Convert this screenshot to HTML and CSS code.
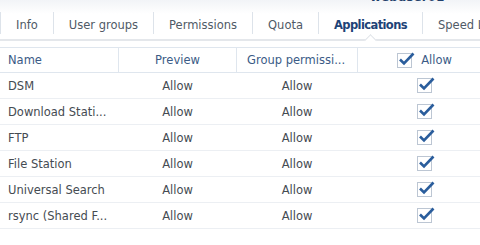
FILE: index.html
```html
<!DOCTYPE html>
<html lang="en">
<head>
  <meta charset="UTF-8">
  <title>Edit user - Applications</title>
  <link rel="stylesheet" href="styles.css">
</head>
<body>
  <div class="head">
    <div class="title"><span>webuser01</span></div>
    <div class="tabs">
      <span class="tab">Info</span>
      <span class="tab">User groups</span>
      <span class="tab">Permissions</span>
      <span class="tab">Quota</span>
      <span class="tab active">Applications</span>
      <span class="tab">Speed Limit</span>
    </div>
  </div>

  <table class="grid">
    <thead>
      <tr>
        <th class="col-name">Name</th>
        <th class="col-preview">Preview</th>
        <th class="col-group">Group permissi...</th>
        <th class="col-allow"><span class="check"></span>Allow</th>
      </tr>
    </thead>
    <tbody></tbody>
  </table>

  <script>
    const apps = ['DSM', 'Download Stati...', 'FTP', 'File Station', 'Universal Search', 'rsync (Shared F...'];
    const tick = '<svg class="tick" viewBox="0 0 18 16"><path d="M3 8.5 L7 12.5 L16.5 2.5" /></svg>';

    const rows = apps.map(name => `
      <tr>
        <td class="col-name">${name}</td>
        <td class="col-preview">Allow</td>
        <td class="col-group">Allow</td>
        <td class="col-allow"><span class="check"></span></td>
      </tr>`).join('');
    document.querySelector('.grid tbody').innerHTML = rows;
    document.querySelectorAll('.check').forEach(c => c.innerHTML = tick);
  </script>
</body>
</html>
```

FILE: styles.css
```css
body {
  margin: 0;
  font-family: "DejaVu Sans", Verdana, sans-serif;
  font-size: 11.5px;
  background: #fff;
  overflow: hidden;
}
.head {
  height: 39px;
  border-bottom: 2px solid #e4e7eb;
  background: linear-gradient(#f2f4f7 0, #fff 14px);
}
/* dialog title, mostly scrolled out of view */
.title {
  height: 12px;
  overflow: hidden;
  padding-left: 370px;
  font-size: 12px;
  font-weight: bold;
  color: #1f3f6b;
}
.title span {
  display: block;
  line-height: 12px;
  margin-top: -9px;
}
.tabs {
  display: flex;
  white-space: nowrap;
  font-size: 11.5px;
}
.tab {
  height: 20px;
  padding: 2px 15px 0;
  line-height: 22px;
  border-left: 1px solid #dde3ea;
  color: #505a66;
}
.tab.active {
  position: relative;
  font-weight: bold;
  letter-spacing: -0.6px;
  color: #1d4377;
}
/* little notch under the active tab */
.tab.active::after {
  content: "";
  position: absolute;
  left: calc(50% - 5px);
  top: 24px;
  width: 8px;
  height: 8px;
  background: #fff;
  border-left: 1px solid #dfe3e8;
  border-top: 1px solid #dfe3e8;
  transform: rotate(45deg);
}
.grid {
  margin-top: 6px;
  width: 499px;
  border-collapse: collapse;
  table-layout: fixed;
}
th, td {
  padding: 0 8px;
  white-space: nowrap;
  overflow: hidden;
}
th {
  height: 24px;
  font-weight: normal;
  color: #3b5b86;
  border-top: 1px solid #dfe6ee;
  border-bottom: 1px solid #dfe6ee;
  border-left: 1px solid #dfe6ee;
}
th:first-child { border-left: none; }
td {
  height: 25px;
  color: #454b52;
  border-bottom: 1px solid #eceff3;
}
.col-name { width: 102px; text-align: left; }
.col-preview { width: 101px; text-align: center; }
.col-group { width: 100px; text-align: center; padding: 0 10px; }
.col-allow { text-align: center; padding: 0 16px 0 8px; }
th.col-group { text-align: left; }
.check {
  position: relative;
  display: inline-block;
  width: 13px;
  height: 13px;
  border: 1px solid #bcc6d3;
  background: #fff;
  vertical-align: middle;
}
th .check { margin-right: 9px; }
.tick {
  position: absolute;
  left: -1px;
  top: -3px;
  width: 18px;
  height: 16px;
  fill: none;
  stroke: #2a5d9c;
  stroke-width: 2.6;
}
```
